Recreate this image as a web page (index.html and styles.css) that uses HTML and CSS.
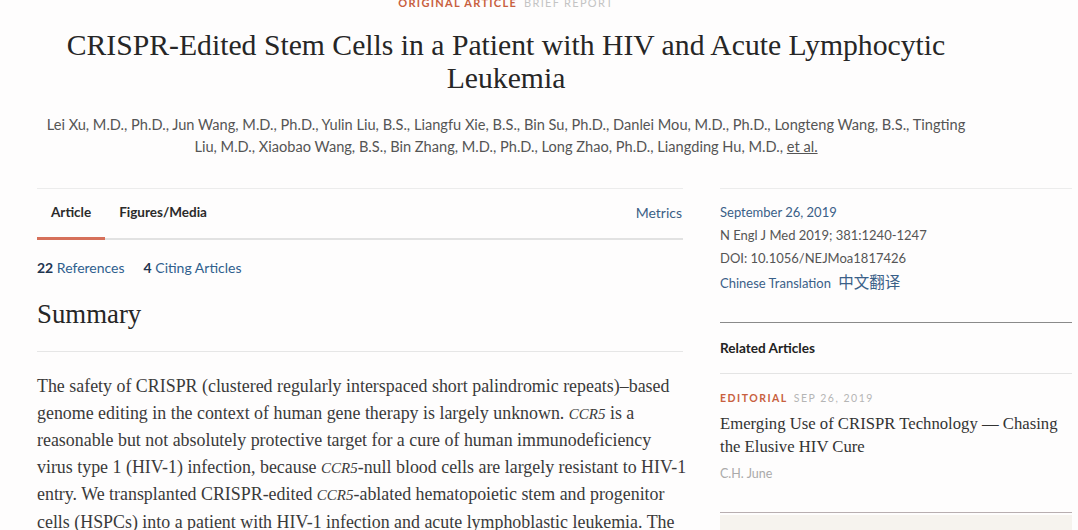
FILE: index.html
```html
<!DOCTYPE html>
<html>
<head>
<meta charset="utf-8">
<link rel="stylesheet" href="styles.css">
</head>
<body>
<header class="head">
  <div class="kicker"><span class="k-red">ORIGINAL ARTICLE</span><span class="k-grey">BRIEF REPORT</span></div>
  <h1 class="title">CRISPR-Edited Stem Cells in a Patient with HIV and Acute Lymphocytic<br>Leukemia</h1>
  <p class="authors">Lei Xu, M.D., Ph.D., Jun Wang, M.D., Ph.D., Yulin Liu, B.S., Liangfu Xie, B.S., Bin Su, Ph.D., Danlei Mou, M.D., Ph.D., Longteng Wang, B.S., Tingting<br>Liu, M.D., Xiaobao Wang, B.S., Bin Zhang, M.D., Ph.D., Long Zhao, Ph.D., Liangding Hu, M.D., <a class="etal">et al.</a></p>
</header>
<main class="layout">
  <section class="main-col">
    <nav class="tabs">
      <span class="tab active">Article</span>
      <span class="tab">Figures/Media</span>
      <span class="tab metrics">Metrics</span>
    </nav>
    <div class="refs"><span><b>22</b> References</span><span><b>4</b> Citing Articles</span></div>
    <h2 class="summary">Summary</h2>
    <p class="body">The safety of CRISPR (clustered regularly interspaced short palindromic repeats)–based genome editing in the context of human gene therapy is largely unknown. <i class="gene">CCR5</i> is a reasonable but not absolutely protective target for a cure of human immunodeficiency virus type 1 (<span class="nw">HIV-1</span>) infection, because <i class="gene">CCR5</i>-null blood cells are largely resistant to <span class="nw">HIV-1</span> entry. We transplanted CRISPR-edited <i class="gene">CCR5</i>-ablated hematopoietic stem and progenitor cells (HSPCs) into a patient with <span class="nw">HIV-1</span> infection and acute lymphoblastic leukemia. The</p>
  </section>
  <aside class="side">
    <div class="meta">
      <div class="blue">September 26, 2019</div>
      <div>N Engl J Med 2019; 381:1240-1247</div>
      <div>DOI: 10.1056/NEJMoa1817426</div>
      <div class="blue">Chinese Translation <span class="cjk">中文翻译</span></div>
    </div>
    <div class="related">
      <div class="rel-head">Related Articles</div>
      <div class="rel-item">
        <div class="rel-kicker"><span class="k-red">EDITORIAL</span><span class="k-grey">SEP 26, 2019</span></div>
        <div class="rel-title">Emerging Use of CRISPR Technology — Chasing the Elusive HIV Cure</div>
        <div class="rel-author">C.H. June</div>
      </div>
      <div class="rel-box"></div>
    </div>
  </aside>
</main>
</body>
</html>
```
FILE: styles.css
```css
html, body {
  margin: 0;
  padding: 0;
  background: #fefdfd;
  overflow: hidden;
}
body {
  width: 1078px;
  height: 530px;
  font-family: Lato, "Open Sans", sans-serif;
  color: #333;
}
.head {
  text-align: center;
  width: 1012px;
}
.kicker {
  font-size: 11px;
  line-height: 11px;
  height: 8px;
  margin-top: -3px;
  font-weight: 700;
  letter-spacing: 1.3px;
  font-family: Lato, sans-serif;
}
.k-red { color: #c8603f; }
.k-grey { color: #c4c4c4; font-weight: 400; margin-left: 7px; }
.title {
  font-family: "Liberation Serif", "DejaVu Serif", serif;
  font-weight: 400;
  font-size: 29.7px;
  line-height: 33px;
  color: #262626;
  margin: 24px 0 0 0;
}
.authors {
  font-size: 14.6px;
  line-height: 22px;
  color: #555;
  margin: 19px 0 0 0;
}
.etal {
  color: #555;
  text-decoration: underline;
}
.layout {
  display: grid;
  grid-template-columns: 646px 352px;
  column-gap: 37px;
  padding-left: 37px;
  margin-top: 30px;
}
.tabs {
  display: flex;
  align-items: center;
  height: 49px;
  border-top: 1px solid #ececec;
  border-bottom: 2px solid #e2e2e2;
  font-size: 13.5px;
  font-weight: 700;
  color: #2b2b2b;
}
.tab {
  height: 49px;
  line-height: 47px;
  box-sizing: border-box;
  padding: 0 14px;
}
.tab + .tab { padding-left: 0; }
.tab.active {
  border-bottom: 3px solid #d6705a;
  margin-bottom: -2px;
  height: 51px;
  line-height: 47px;
  margin-right: 14px;
}
.tab.metrics {
  margin-left: auto;
  padding: 0 1px 0 0;
  font-weight: 400;
  font-size: 14px;
  color: #3b5f86;
}
.refs {
  display: flex;
  gap: 19px;
  font-size: 14px;
  line-height: 20px;
  color: #2f5f8e;
  margin-top: 18px;
}
.refs b { color: #1f3550; font-weight: 700; }
.summary {
  font-family: "Liberation Serif", serif;
  font-weight: 400;
  font-size: 26.8px;
  line-height: 30px;
  color: #262626;
  margin: 21px 0 0 0;
  padding-bottom: 22px;
  border-bottom: 1px solid #e6e6e6;
}
.body {
  font-family: "Liberation Serif", serif;
  font-size: 17.9px;
  line-height: 26.6px;
  color: #3a3a3a;
  margin: 21px 0 0 0;
  width: 654px;
}
.nw { white-space: nowrap; }
.gene {
  font-size: 15px;
  font-style: italic;
}
.side {
  border-top: 1px solid #ececec;
}
.meta {
  padding-top: 12px;
  font-size: 13px;
  line-height: 23px;
  color: #555;
}
.meta .blue { color: #3a6088; }
.cjk {
  font-family: "Noto Sans CJK SC", sans-serif;
  font-size: 15.5px;
  margin-left: 4px;
}
.related {
  margin-top: 27px;
  border-top: 1px solid #8a8a8a;
}
.rel-head {
  font-size: 13.6px;
  font-weight: 700;
  color: #222;
  line-height: 50px;
  border-bottom: 1px solid #e4e4e4;
}
.rel-item {
  padding-top: 15px;
  padding-bottom: 28px;
  border-bottom: 1px solid #b8aeb0;
}
.rel-kicker {
  font-size: 10.5px;
  line-height: 18px;
  font-weight: 700;
  letter-spacing: 1.5px;
}
.rel-kicker .k-grey { color: #b5b5b5; margin-left: 6px; font-weight: 400; }
.rel-title {
  font-family: "Liberation Serif", serif;
  font-size: 16.7px;
  line-height: 23px;
  color: #333;
  margin-top: 5px;
}
.rel-author {
  font-size: 12.5px;
  color: #aaa;
  line-height: 20px;
  margin-top: 6px;
}
.rel-box {
  height: 30px;
  background: #f6f3ee;
  margin-top: 2px;
}
```
